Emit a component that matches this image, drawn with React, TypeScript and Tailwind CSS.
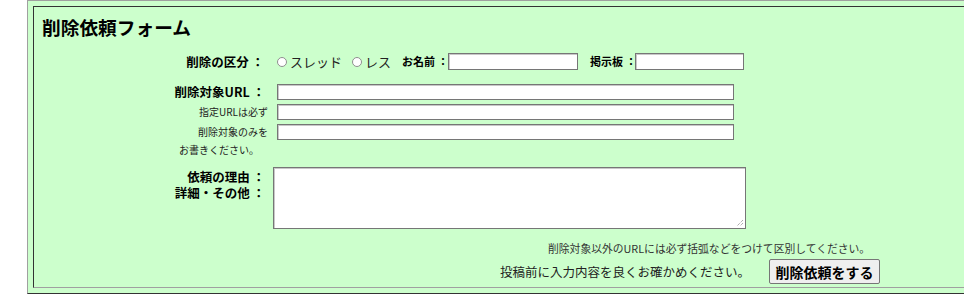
const jp = "font-['Noto_Sans_CJK_JP','Noto_Sans',sans-serif]";

function Radio({ label, w }: { label: string; w: number }) {
  return (
    <span className="flex items-center" style={{ width: w }}>
      <span className="w-[10px] h-[10px] rounded-full border border-[#8f8f8f] bg-white" />
      <span className="ml-[3px] text-[13px] leading-[17px] text-[#222]">{label}</span>
    </span>
  );
}

function TextBox({ w, h = 16 }: { w: number; h?: number }) {
  return (
    <span
      className="block bg-white border border-[#767676] shadow-[inset_1px_1px_0_#c8c8c8]"
      style={{ width: w, height: h }}
    />
  );
}

export default function App() {
  return (
    <div className={`w-[964px] h-[304px] overflow-hidden bg-white text-black ${jp}`}>
      <div className="ml-[27px] w-[960px] h-[294px] bg-[#ccffcc] border border-t-[#a0a0a0] border-l-[#a0a0a0] border-r-[#333] border-b-[#333] p-[5px]">
        <div className="h-full flex flex-col border border-t-[#333] border-l-[#333] border-r-[#a0a0a0] border-b-[#a0a0a0]">
          <h3 className="mt-[9px] ml-[8px] h-[22px] text-[18.72px] leading-[22px] font-bold">削除依頼フォーム</h3>

          {/* 区分 / 名前 / 掲示板 */}
          <div className="mt-[15px] h-[17px] flex items-center">
            <span className="w-[236px] pr-[6px] text-right text-[12.5px] font-bold leading-[17px]">削除の区分 ：</span>
            <span className="ml-[7px] flex items-center">
              <Radio label="スレッド" w={75} />
              <Radio label="レス" w={50} />
            </span>
            <span className="w-[43px] text-[11px] font-bold leading-[17px] whitespace-nowrap">お名前 ：</span>
            <span className="ml-[3px]"><TextBox w={130} h={17} /></span>
            <span className="ml-[12px] w-[42px] text-[11px] font-bold leading-[17px] whitespace-nowrap">掲示板 ：</span>
            <span className="ml-[3px]"><TextBox w={109} h={17} /></span>
          </div>

          {/* URL */}
          <div className="mt-[14px] flex">
            <div className="w-[243px] flex flex-col items-end">
              <span className="h-[16px] leading-[16px] pr-[12px] text-[12.5px] font-bold whitespace-nowrap">削除対象URL ：</span>
              <span className="mt-[4px] h-[16px] leading-[16px] pr-[9px] text-[10px] text-[#222]">指定URLは必ず</span>
              <span className="mt-[4px] h-[16px] leading-[16px] pr-[9px] text-[10px] text-[#222]">削除対象のみを</span>
            </div>
            <div className="flex flex-col gap-[4px]">
              <TextBox w={457} />
              <TextBox w={457} />
              <TextBox w={457} />
            </div>
          </div>
          <div className="mt-[2px] ml-[145px] h-[16px] leading-[16px] text-[10px] text-[#222]">お書きください。</div>

          {/* 理由 */}
          <div className="mt-[9px] flex">
            <div className="w-[236px] pt-[2px] pr-[5px] flex flex-col items-end text-[12.5px] font-bold leading-[16px]">
              <span>依頼の理由 ：</span>
              <span>詳細・その他 ：</span>
            </div>
            <div className="ml-[3px] relative">
              <TextBox w={473} h={62} />
              <svg className="absolute right-[2px] bottom-[2px]" width="8" height="8" viewBox="0 0 8 8">
                <path d="M7 1 L1 7 M7 4 L4 7" stroke="#888" strokeWidth="1" strokeDasharray="1 1" />
              </svg>
            </div>
          </div>

          <div className="mt-[12px] ml-[514px] h-[14px] leading-[14px] text-[10.8px] text-[#333] whitespace-nowrap">
            削除対象以外のURLには必ず括弧などをつけて区別してください。
          </div>

          <div className="mt-[4px] flex items-center">
            <span className="ml-[466px] w-[269px] text-[12.5px] leading-[25px] text-[#222] whitespace-nowrap">投稿前に入力内容を良くお確かめください。</span>
            <button className="w-[111px] h-[25px] bg-[#efefef] border border-[#767676] rounded-[2px] text-[14px] font-bold leading-[22px]">
              削除依頼をする
            </button>
          </div>
        </div>
      </div>
    </div>
  );
}
